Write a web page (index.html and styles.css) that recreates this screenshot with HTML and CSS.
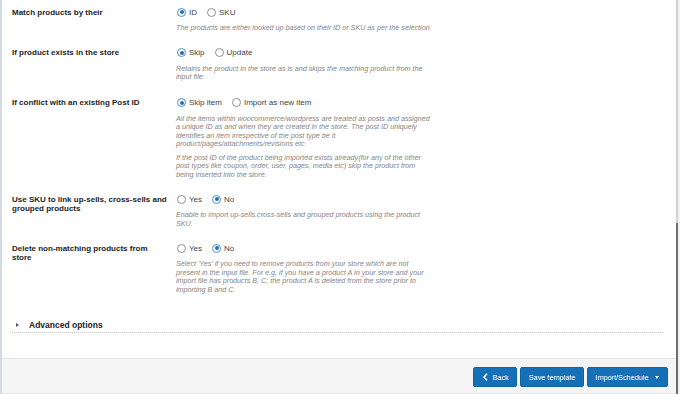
FILE: index.html
```html
<!DOCTYPE html>
<html lang="en">
<head>
  <meta charset="UTF-8" />
  <meta name="viewport" content="width=device-width, initial-scale=1.0" />
  <title>Import options</title>
  <link rel="stylesheet" href="styles.css">
</head>
<body>
<div class="screen">
  <div class="panel">
    <div class="rows">
      <div class="row">
        <div class="label">Match products by their</div>
        <div class="field">
          <div class="options">
            <label><input type="radio" name="match" checked> ID</label>
            <label><input type="radio" name="match"> SKU</label>
          </div>
          <p class="desc">The products are either looked up based on their ID or SKU as per the selection.</p>
        </div>
      </div>

      <div class="row">
        <div class="label">If product exists in the store</div>
        <div class="field">
          <div class="options">
            <label><input type="radio" name="exists" checked> Skip</label>
            <label><input type="radio" name="exists"> Update</label>
          </div>
          <p class="desc">Retains the product in the store as is and skips the matching product from the input file.</p>
        </div>
      </div>

      <div class="row">
        <div class="label">If conflict with an existing Post ID</div>
        <div class="field">
          <div class="options">
            <label><input type="radio" name="conflict" checked> Skip item</label>
            <label><input type="radio" name="conflict"> Import as new item</label>
          </div>
          <p class="desc">All the items within woocommerce/wordpress are treated as posts and assigned a unique ID as and when they are created in the store. The post ID uniquely identifies an item irrespective of the post type be it product/pages/attachments/revisions etc.</p>
          <p class="desc">If the post ID of the product being imported exists already(for any of the other post types like coupon, order, user, pages, media etc) skip the product from being inserted into the store.</p>
        </div>
      </div>

      <div class="row">
        <div class="label">Use SKU to link up-sells, cross-sells and grouped products</div>
        <div class="field">
          <div class="options">
            <label><input type="radio" name="link"> Yes</label>
            <label><input type="radio" name="link" checked> No</label>
          </div>
          <p class="desc">Enable to import up-sells,cross-sells and grouped products using the product SKU.</p>
        </div>
      </div>

      <div class="row">
        <div class="label">Delete non-matching products from store</div>
        <div class="field">
          <div class="options">
            <label><input type="radio" name="delete"> Yes</label>
            <label><input type="radio" name="delete" checked> No</label>
          </div>
          <p class="desc">Select 'Yes' if you need to remove products from your store which are not present in the input file. For e.g, if you have a product A in your store and your import file has products B, C; the product A is deleted from the store prior to importing B and C.</p>
        </div>
      </div>
    </div>

    <div class="advanced">
      <span class="arrow"></span>
      <span>Advanced options</span>
    </div>

    <div class="footer">
      <button class="btn">
        <svg width="5" height="8" viewBox="0 0 5 8"><path d="M4 0.8 L1 4 L4 7.2" fill="none" stroke="#fff" stroke-width="1.6"/></svg>
        Back
      </button>
      <button class="btn">Save template</button>
      <button class="btn">Import/Schedule <span class="caret"></span></button>
    </div>
  </div>
  <div class="scrollbar"><div class="thumb"></div></div>
</div>
</body>
</html>
```

FILE: styles.css
```css
body {
  margin: 0;
  background: #fff;
  font-family: "Liberation Sans", Arial, sans-serif;
  color: #1d2327;
}
.screen {
  display: flex;
  height: 394px;
  overflow: hidden;
}
.panel {
  flex: 1;
  display: flex;
  flex-direction: column;
  border-left: 2px solid #d3dbe2;
  background: #fff;
}
.rows {
  padding-top: 1px;
}
.row {
  display: grid;
  grid-template-columns: 156px 1fr;
  column-gap: 8px;
  padding: 6px 0 9px 10px;
}
.row:nth-child(3) {
  padding-top: 7px;
}
.label {
  font-size: 8px;
  font-weight: bold;
  line-height: 9px;
  padding-top: 0.5px;
}
.options {
  display: flex;
  align-items: center;
  height: 10px;
  font-size: 8px;
  color: #3c434a;
}
.options label {
  display: inline-flex;
  align-items: center;
  gap: 3px;
  margin-right: 9px;
}
.options input {
  -webkit-appearance: none;
  appearance: none;
  width: 9px;
  height: 9px;
  margin: 0 0 0 1px;
  border: 1px solid #8c8f94;
  border-radius: 50%;
  background: #fff;
  box-sizing: border-box;
  position: relative;
}
.options input:checked {
  border-color: #4a8fd0;
}
.options input:checked::before {
  content: "";
  position: absolute;
  left: 1.5px;
  top: 1.5px;
  width: 4px;
  height: 4px;
  border-radius: 50%;
  background: #2271b1;
}
.desc {
  margin: 7px 0 0;
  max-width: 258px;
  font-size: 7.2px;
  line-height: 8.5px;
  font-style: italic;
  color: #858585;
}
.desc + .desc {
  margin-top: 5px;
}
.advanced {
  display: flex;
  align-items: center;
  margin: 17px 13px 0 10px;
  padding-bottom: 2px;
  border-bottom: 1px dotted #c4c4c4;
  font-size: 8.5px;
  font-weight: bold;
  line-height: 10px;
}
.arrow {
  width: 0;
  height: 0;
  margin: 0 10px 0 4px;
  border-left: 3px solid #555;
  border-top: 2px solid transparent;
  border-bottom: 2px solid transparent;
}
.footer {
  margin-top: auto;
  height: 36px;
  box-sizing: border-box;
  padding: 8px 8px 0;
  display: flex;
  justify-content: flex-end;
  align-items: flex-start;
  gap: 3px;
  background: #f5f5f5;
  border-top: 1px solid #e4e4e4;
  border-bottom: 1px solid #e4e4e4;
}
.btn {
  display: inline-flex;
  align-items: center;
  gap: 4px;
  height: 20px;
  padding: 0 7.5px;
  background: #1570b8;
  border: 1px solid #0f64a6;
  border-radius: 2px;
  color: #fff;
  font-family: "Liberation Sans", Arial, sans-serif;
  font-size: 7.3px;
  cursor: pointer;
}
.btn svg {
  margin-left: 2px;
}
.caret {
  width: 0;
  height: 0;
  margin: 0 1px 0 2px;
  border-top: 3px solid #fff;
  border-left: 2.5px solid transparent;
  border-right: 2.5px solid transparent;
}
.scrollbar {
  width: 4px;
  display: flex;
  flex-direction: column;
  background: #f2f2f2;
  border-left: 2px solid #d0d0d0;
  box-sizing: border-box;
}
.thumb {
  margin-top: 223px;
  margin-left: -2px;
  width: 2px;
  flex: 1;
  background: #6e6e6e;
}
```
